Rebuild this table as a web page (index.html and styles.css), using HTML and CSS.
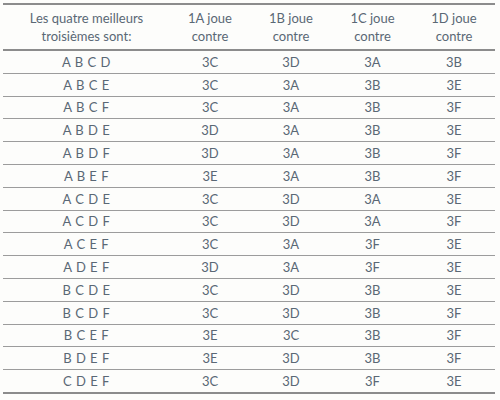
FILE: index.html
```html
<!DOCTYPE html>
<html lang="fr">
<head>
<meta charset="utf-8">
<link rel="stylesheet" href="styles.css">
</head>
<body>
<table class="grid">
  <colgroup>
    <col class="c1"><col class="c2"><col class="c3"><col class="c4"><col class="c5">
  </colgroup>
  <thead>
    <tr>
      <th>Les quatre meilleurs<br>troisièmes sont:</th>
      <th>1A joue<br>contre</th>
      <th>1B joue<br>contre</th>
      <th>1C joue<br>contre</th>
      <th>1D joue<br>contre</th>
    </tr>
  </thead>
  <tbody>
    <tr><td class="combo">A B C D</td><td>3C</td><td>3D</td><td>3A</td><td>3B</td></tr>
    <tr><td class="combo">A B C E</td><td>3C</td><td>3A</td><td>3B</td><td>3E</td></tr>
    <tr><td class="combo">A B C F</td><td>3C</td><td>3A</td><td>3B</td><td>3F</td></tr>
    <tr><td class="combo">A B D E</td><td>3D</td><td>3A</td><td>3B</td><td>3E</td></tr>
    <tr><td class="combo">A B D F</td><td>3D</td><td>3A</td><td>3B</td><td>3F</td></tr>
    <tr><td class="combo">A B E F</td><td>3E</td><td>3A</td><td>3B</td><td>3F</td></tr>
    <tr><td class="combo">A C D E</td><td>3C</td><td>3D</td><td>3A</td><td>3E</td></tr>
    <tr><td class="combo">A C D F</td><td>3C</td><td>3D</td><td>3A</td><td>3F</td></tr>
    <tr><td class="combo">A C E F</td><td>3C</td><td>3A</td><td>3F</td><td>3E</td></tr>
    <tr><td class="combo">A D E F</td><td>3D</td><td>3A</td><td>3F</td><td>3E</td></tr>
    <tr><td class="combo">B C D E</td><td>3C</td><td>3D</td><td>3B</td><td>3E</td></tr>
    <tr><td class="combo">B C D F</td><td>3C</td><td>3D</td><td>3B</td><td>3F</td></tr>
    <tr><td class="combo">B C E F</td><td>3E</td><td>3C</td><td>3B</td><td>3F</td></tr>
    <tr><td class="combo">B D E F</td><td>3E</td><td>3D</td><td>3B</td><td>3F</td></tr>
    <tr><td class="combo">C D E F</td><td>3C</td><td>3D</td><td>3F</td><td>3E</td></tr>
  </tbody>
</table>
</body>
</html>
```
FILE: styles.css
```css
html, body {
  margin: 0;
  padding: 0;
  background: #fdfdfb;
}
body {
  padding: 3px 0 0 3px;
  font-family: Lato, "Open Sans", sans-serif;
  color: #5a6875;
}
.grid {
  width: 492px;
  border-collapse: collapse;
  table-layout: fixed;
  font-size: 13px;
}
.c1 { width: 167px; }
.c2 { width: 80px; }
.c3 { width: 82px; }
.c4 { width: 81px; }
.c5 { width: 82px; }
.grid th {
  font-weight: normal;
  height: 44px;
  line-height: 18px;
  padding: 0;
  border-top: 2px solid #8c8c8c;
  border-bottom: 2px solid #8c8c8c;
  vertical-align: middle;
  text-align: center;
}
.grid td {
  height: 21.8px;
  padding: 0;
  text-align: center;
  vertical-align: middle;
  border-bottom: 1px solid #9c9c9c;
}
.grid tbody tr:last-child td {
  border-bottom: 2px solid #8c8c8c;
}
.combo {
  letter-spacing: 0.5px;
}
```
